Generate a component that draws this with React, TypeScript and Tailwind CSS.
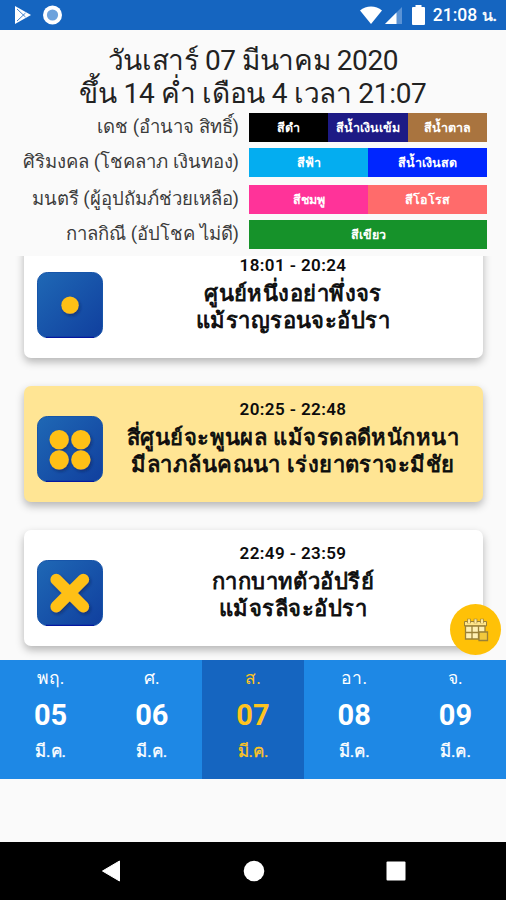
import React from 'react';

interface Swatch {
  name: string;
  color: string;
}

interface ColorRow {
  label: string;
  spacing: string;
  swatches: Swatch[];
}

interface Slot {
  time: string;
  lines: string[];
  symbol: 'one' | 'four' | 'cross';
  active?: boolean;
}

const colorRows: ColorRow[] = [
  {
    label: 'เดช (อำนาจ สิทธิ์)',
    spacing: 'mt-0',
    swatches: [
      { name: 'สีดำ', color: 'bg-black' },
      { name: 'สีน้ำเงินเข้ม', color: 'bg-[#1d1a85]' },
      { name: 'สีน้ำตาล', color: 'bg-[#a9743f]' },
    ],
  },
  {
    label: 'ศิริมงคล (โชคลาภ เงินทอง)',
    spacing: 'mt-1.5',
    swatches: [
      { name: 'สีฟ้า', color: 'bg-[#04adf0]' },
      { name: 'สีน้ำเงินสด', color: 'bg-[#0026ff]' },
    ],
  },
  {
    label: 'มนตรี (ผู้อุปถัมภ์ช่วยเหลือ)',
    spacing: 'mt-2',
    swatches: [
      { name: 'สีชมพู', color: 'bg-[#ff3399]' },
      { name: 'สีโอโรส', color: 'bg-[#ff6b6b]' },
    ],
  },
  {
    label: 'กาลกิณี (อัปโชค ไม่ดี)',
    spacing: 'mt-1.5',
    swatches: [{ name: 'สีเขียว', color: 'bg-[#16922a]' }],
  },
];

const slots: Slot[] = [
  {
    time: '18:01 - 20:24',
    lines: ['ศูนย์หนึ่งอย่าพึ่งจร', 'แม้ราญรอนจะอัปรา'],
    symbol: 'one',
  },
  {
    time: '20:25 - 22:48',
    lines: ['สี่ศูนย์จะพูนผล แม้จรดลดีหนักหนา', 'มีลาภล้นคณนา เร่งยาตราจะมีชัย'],
    symbol: 'four',
    active: true,
  },
  {
    time: '22:49 - 23:59',
    lines: ['กากบาทตัวอัปรีย์', 'แม้จรลีจะอัปรา'],
    symbol: 'cross',
  },
];

const days = [
  { day: 'พฤ.', date: '05' },
  { day: 'ศ.', date: '06' },
  { day: 'ส.', date: '07', active: true },
  { day: 'อา.', date: '08' },
  { day: 'จ.', date: '09' },
];

const StatusBar = () => (
  <div className="flex h-[30px] shrink-0 items-center justify-between bg-[#1565c0] pl-3.5 pr-[9px] text-white">
    <div className="flex items-center gap-[11px]">
      <svg width="18" height="20" viewBox="0 0 18 20">
        <path d="M1 1 17 10 1 19Z" fill="#fff" />
        <path d="M3 4 11.5 12M3 16 11.5 8" stroke="#1565c0" strokeWidth="0.8" />
      </svg>
      <svg width="20" height="20" viewBox="0 0 20 20">
        <circle cx="9.5" cy="10" r="9.5" fill="#fff" />
        <circle cx="9.5" cy="10" r="5.6" fill="#6da2dc" />
      </svg>
    </div>
    <div className="flex items-center">
      <svg width="24" height="20" viewBox="0 0 24 20">
        <path d="M1 5.5C7 .3 17 .3 23 5.5L12 19Z" fill="#fff" />
      </svg>
      <svg className="ml-0.5" width="18" height="18" viewBox="0 0 18 18">
        <path d="M0 18 17 1V18Z" fill="#5b93d5" />
        <path d="M0 18 11.5 6.5V18Z" fill="#fff" />
      </svg>
      <svg className="ml-[9px]" width="13" height="20" viewBox="0 0 13 20">
        <path d="M3.5 0h6v2H12q1 0 1 1v16q0 1-1 1H1q-1 0-1-1V3q0-1 1-1h2.5Z" fill="#fff" />
      </svg>
      <span className="ml-2 h-5 whitespace-nowrap text-[17.5px] font-medium leading-[21px]">
        21:08 <span className="text-[16px] [-webkit-text-stroke:0.4px_#fff]">น.</span>
      </span>
    </div>
  </div>
);

const SlotIcon: React.FC<{ symbol: Slot['symbol'] }> = ({ symbol }) => (
  <svg width="66" height="66" viewBox="0 0 67 67">
    <defs>
      <linearGradient id={`bg-${symbol}`} x1="0" y1="0" x2="1" y2="1">
        <stop offset="0" stopColor="#1f68b5" />
        <stop offset="1" stopColor="#103f9e" />
      </linearGradient>
      <filter id={`shade-${symbol}`} x="-30%" y="-30%" width="170%" height="170%">
        <feDropShadow dx="1.5" dy="2" stdDeviation="1.5" floodColor="#0a2350" floodOpacity="0.55" />
      </filter>
    </defs>
    <rect x="0.5" y="0.5" width="66" height="66" rx="10" fill={`url(#bg-${symbol})`} stroke="#1452a8" />
    <path d="M9 66.3H58" stroke="#0518a0" strokeWidth="1.2" />
    <g filter={`url(#shade-${symbol})`} fill="#ffc015">
      {symbol === 'one' && <circle cx="33.5" cy="33.7" r="8.8" />}
      {symbol === 'four' && (
        <>
          <circle cx="22.5" cy="24" r="9.8" />
          <circle cx="44.5" cy="24" r="9.8" />
          <circle cx="22.5" cy="44.5" r="9.8" />
          <circle cx="44.5" cy="44.5" r="9.8" />
        </>
      )}
      {symbol === 'cross' && (
        <path d="M19.5 19.8 47 47.3M47 19.8 19.5 47.3" stroke="#ffc015" strokeWidth="11.8" strokeLinecap="round" />
      )}
    </g>
  </svg>
);

const SlotCard: React.FC<{ slot: Slot }> = ({ slot }) => (
  <div
    className={`flex h-[116px] shrink-0 items-start rounded-[7px] pl-[13px] shadow-[0_4px_8px_rgba(0,0,0,0.28)] ${
      slot.active ? 'bg-[#ffe594]' : 'bg-white'
    }`}
  >
    <div className="shrink-0 pt-[30px]">
      <SlotIcon symbol={slot.symbol} />
    </div>
    <div className="flex flex-1 flex-col items-center whitespace-nowrap pl-px pt-[11px] text-[#0c0c0c]">
      <div className="mb-[3px] text-[17px] font-semibold leading-[24px] tracking-[0.4px]">{slot.time}</div>
      {slot.lines.map((line) => (
        <div
          key={line}
          className="h-[27px] text-[22px] leading-[27px] tracking-[0.45px] [-webkit-text-stroke:0.8px_#0c0c0c]"
        >
          {line}
        </div>
      ))}
    </div>
  </div>
);

const App: React.FC = () => {
  return (
    <div className="relative flex h-[900px] w-[506px] flex-col overflow-hidden bg-[#fafafa] font-[Roboto,sans-serif]">
      <StatusBar />

      {/* Date and lucky colours */}
      <div className="h-[226px] shrink-0 pt-[14px]">
        <div className="flex flex-col items-center whitespace-nowrap text-[28px] leading-[33px] text-[#222]">
          <div className="h-[33px] tracking-[-0.4px]">วันเสาร์ 07 มีนาคม 2020</div>
          <div className="h-[33px] tracking-[-0.3px]">ขึ้น 14 ค่ำ เดือน 4 เวลา 21:07</div>
        </div>
        <div className="mt-[3px] pr-[19px]">
          {colorRows.map((row) => (
            <div key={row.label} className={`flex h-[29px] items-center justify-end ${row.spacing}`}>
              <div className="mr-2.5 h-[29px] whitespace-nowrap text-[18.5px] leading-[29px] text-[#3c3c3c]">
                {row.label}
              </div>
              <div className="flex h-[29px] w-[238px]">
                {row.swatches.map((swatch) => (
                  <div
                    key={swatch.name}
                    className={`flex flex-1 items-center justify-center whitespace-nowrap pt-0.5 text-[12.5px] font-bold text-white ${swatch.color}`}
                  >
                    {swatch.name}
                  </div>
                ))}
              </div>
            </div>
          ))}
        </div>
      </div>

      {/* Time slots */}
      <div className="flex h-[404px] shrink-0 flex-col justify-end gap-7 overflow-hidden px-[23.5px] pb-[14px]">
        {slots.map((slot) => (
          <SlotCard key={slot.time} slot={slot} />
        ))}
      </div>

      {/* Day picker */}
      <div className="flex h-[119px] shrink-0 bg-[#1e88e5]">
        {days.map((item) => (
          <div
            key={item.date}
            className={`flex flex-1 flex-col items-center pt-1.5 ${
              item.active ? 'bg-[#1565c0] text-[#ffc41f]' : 'text-white'
            }`}
          >
            <div className="h-6 text-[17.5px] leading-6">{item.day}</div>
            <div className="mt-2.5 text-[29px] font-bold leading-[30px]">{item.date}</div>
            <div className="mt-[9px] h-6 text-[17px] leading-6 [-webkit-text-stroke:0.3px]">มี.ค.</div>
          </div>
        ))}
      </div>

      <div className="h-[63px] shrink-0" />

      {/* System navigation */}
      <div className="flex h-[58px] shrink-0 items-center justify-between bg-black pl-[101px] pr-[100px]">
        <svg width="20" height="22" viewBox="0 0 20 22">
          <path d="M18.5 1V21L1.5 11Z" fill="#fff" stroke="#fff" strokeLinejoin="round" />
        </svg>
        <svg width="22" height="22" viewBox="0 0 22 22">
          <circle cx="11" cy="11" r="10.3" fill="#fff" />
        </svg>
        <svg width="20" height="20" viewBox="0 0 20 20">
          <rect x="0.5" y="0.5" width="19" height="19" rx="1" fill="#fff" />
        </svg>
      </div>

      {/* Calendar button */}
      <button className="absolute left-[450px] top-[604px] flex h-[51px] w-[51px] items-center justify-center rounded-full bg-[#ffc107]">
        <svg width="26" height="24" viewBox="0 0 26 24">
          <path d="M1.5 3.5H23.5V8H1.5Z" fill="#ffe58a" stroke="#9b8136" />
          <path d="M6 .8v4.500M12.500 .8v4.500M19 .8v4.500" stroke="#9b8136" strokeWidth="3.6" />
          <path d="M6 1.200v4M12.500 1.200v4M19 1.200v4" stroke="#ffe9a0" strokeWidth="2.2" />
          <g fill="#fff0b3" stroke="#9b8136" strokeWidth="1.3">
            <path d="M2.500 8H9v6.500H2.500ZM9 8h6.500v6.500H9ZM15.500 8H22v6.500h-6.500ZM2.500 14.500H9V21H2.500ZM9 14.500h6.500V21H9Z" />
            <path d="M16 14h8.500v8.500H16Z" fill="#f2c83c" />
          </g>
        </svg>
      </button>
    </div>
  );
};

export default App;
